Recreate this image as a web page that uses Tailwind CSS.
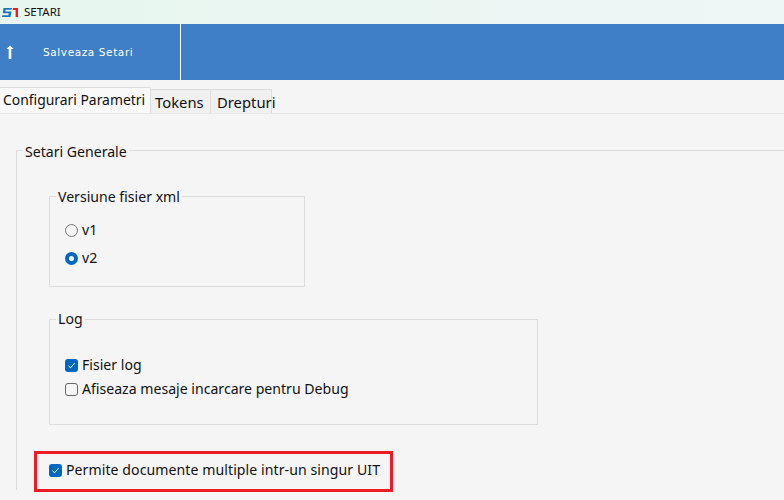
<!DOCTYPE html>
<html>
<head>
<meta charset="utf-8">
<script src="https://cdn.jsdelivr.net/npm/@tailwindcss/browser@4"></script>
</head>
<body class="m-0 w-[784px] h-[500px] overflow-hidden bg-[#f5f5f5] font-['Noto_Sans','Open_Sans',sans-serif] text-[#111]">
<div class="h-6 flex items-center gap-[6px] pl-[2px] bg-gradient-to-r from-[#e7f6ef] to-[#eef6f6] text-[11.5px]">
  <svg width="16" height="9" viewBox="0 0 16 9"><path d="M1.5 0H10L9.5 1.8H3.6L3.3 3.4H9.4L8.5 9H0L.4 7.2H6.4L6.7 5.2H.8z" fill="#1b75bb"/><path d="M11 0H16V9H13.6V1.9H10.6z" fill="#ed1c24"/></svg>
  <span>SETARI</span>
</div>
<div class="h-14 bg-[#3f7fc7] flex items-stretch text-white">
  <div class="w-[181px] border-r border-white flex items-center">
    <svg class="ml-[5px]" width="10" height="16" viewBox="0 0 10 16"><path d="M5 1.5 8.5 5H6.3v10H3.7V5H1.5z" fill="#fff"/></svg>
    <span class="ml-[28px] pt-[2px] font-['DejaVu_Sans',sans-serif] text-[10.5px] tracking-[0.6px]">Salveaza Setari</span>
  </div>
</div>
<div class="mt-2 h-[26px] flex items-end border-b border-[#e6e6e6] text-[14.8px] leading-[20px] whitespace-nowrap">
  <div class="h-[26px] w-[151px] pl-[3px] pt-[2px] text-[13.9px] bg-[#f9f9f9] border-t border-r border-[#dcdcdc] rounded-tr-[2px]">Configurari Parametri</div>
  <div class="h-[24px] w-[60px] pl-[4px] pt-[2px] bg-[#f0f0f0] border-t border-r border-[#dcdcdc]">Tokens</div>
  <div class="h-[24px] w-[61px] pl-[6px] pt-[2px] bg-[#f0f0f0] border-t border-r border-[#dcdcdc]">Drepturi</div>
</div>
<div class="pl-4 pt-[26px] text-[14.1px] leading-[20px] whitespace-nowrap">
  <fieldset class="w-[800px] h-[350px] border-l border-t border-[#dcdcdc] pl-[32px]">
    <legend class="ml-[-26px] px-[2px]"><span class="relative top-[2px]">Setari Generale</span></legend>
    <fieldset class="mt-[26px] w-[256px] h-[101px] border border-[#dcdcdc] pl-[15px]">
      <legend class="ml-[-9px] px-[2px]"><span class="relative top-[1px]">Versiune fisier xml</span></legend>
      <div class="mt-[14px] flex items-center gap-[4px] h-[20px]">
        <span class="w-[13px] h-[13px] rounded-full border border-[#777] bg-[#f5f5f5]"></span><span>v1</span>
      </div>
      <div class="mt-[8px] flex items-center gap-[4px] h-[20px]">
        <span class="w-[13px] h-[13px] rounded-full border-[4px] border-[#0067c0] bg-white"></span><span>v2</span>
      </div>
    </fieldset>
    <fieldset class="mt-[22px] w-[489px] h-[116px] border border-[#dcdcdc] pl-[15px]">
      <legend class="ml-[-9px] px-[2px]">Log</legend>
      <div class="mt-[26px] flex items-center gap-[4px] h-[20px]">
        <span class="w-[13px] h-[13px] rounded-[3px] bg-[#0067c0] flex items-center justify-center"><svg width="9" height="9" viewBox="0 0 9 9"><path d="M1.5 4.8 3.6 6.8 7.6 2.2" fill="none" stroke="#fff" stroke-width="1"/></svg></span><span>Fisier log</span>
      </div>
      <div class="mt-[4px] flex items-center gap-[4px] h-[20px]">
        <span class="w-[13px] h-[13px] rounded-[3px] border border-[#666] bg-[#f5f5f5]"></span><span>Afiseaza mesaje incarcare pentru Debug</span>
      </div>
    </fieldset>
    <div class="relative mt-[35px] flex items-center gap-[4px] h-[20px]">
      <span class="w-[13px] h-[13px] rounded-[3px] bg-[#0067c0] flex items-center justify-center"><svg width="9" height="9" viewBox="0 0 9 9"><path d="M1.5 4.8 3.6 6.8 7.6 2.2" fill="none" stroke="#fff" stroke-width="1"/></svg></span><span class="tracking-[0.07px]">Permite documente multiple intr-un singur UIT</span>
      <div class="absolute left-[-15px] top-[-9px] w-[359px] h-[41px] border-[3px] border-[#ed1c24]"></div>
    </div>
  </fieldset>
</div>
</body>
</html>
